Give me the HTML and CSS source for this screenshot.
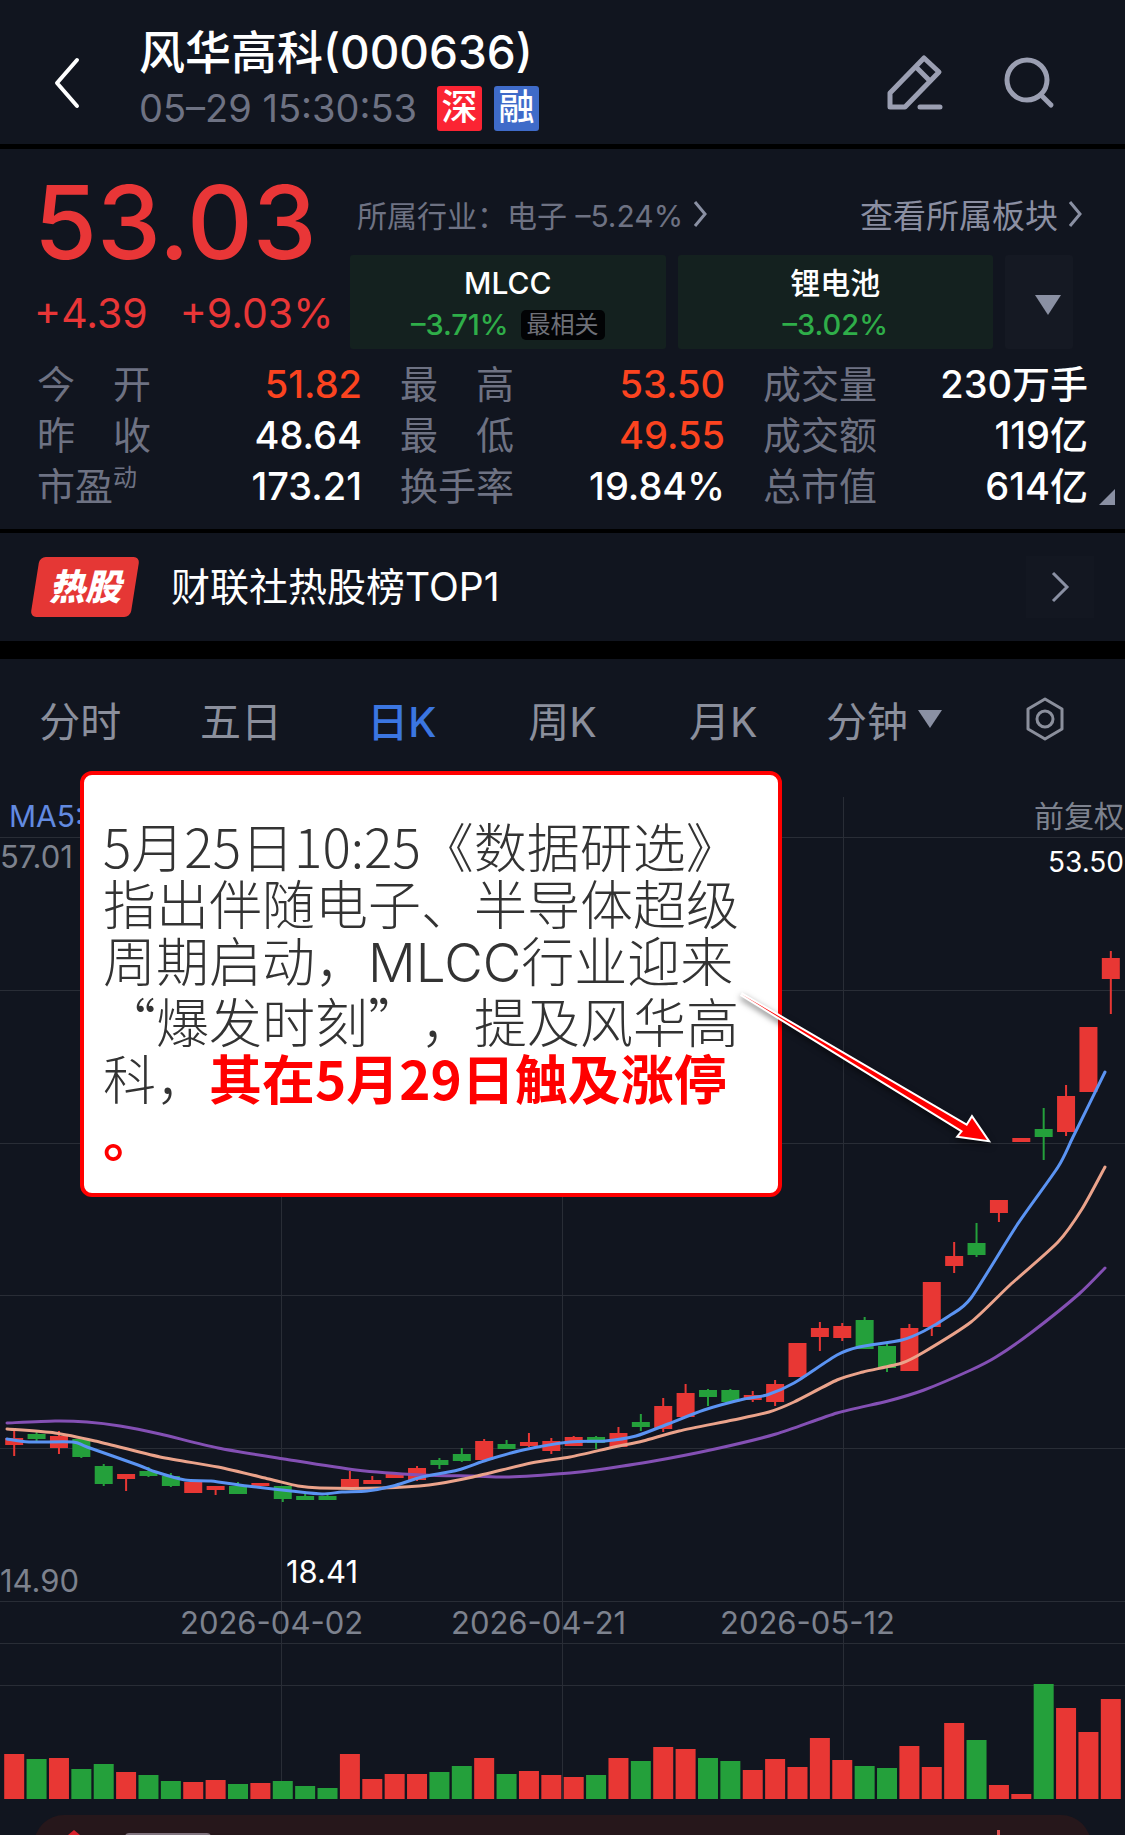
FILE: index.html
```html
<!DOCTYPE html>
<html lang="zh-CN">
<head>
<meta charset="utf-8">
<meta name="viewport" content="width=device-width, initial-scale=1">
<title>风华高科(000636)</title>
<link rel="stylesheet" href="styles.css">
</head>
<body>
<header class="topbar">
  <button class="icon-btn back" aria-label="返回">
    <svg width="28" height="52" viewBox="0 0 28 52"><path d="M24 3 4 26l20 23" fill="none" stroke="#fff" stroke-width="4" stroke-linecap="round" stroke-linejoin="round"/></svg>
  </button>
  <div class="title">
    <h1>风华高科(000636)</h1>
    <div class="meta"><time>05–29 15:30:53</time><span class="badge badge-red">深</span><span class="badge badge-blue">融</span></div>
  </div>
  <button class="icon-btn" aria-label="编辑">
    <svg width="56" height="58" viewBox="0 0 56 58" fill="none" stroke="#9b9fb2" stroke-width="5" stroke-linecap="round" stroke-linejoin="round"><path d="M3 39 37 4 52 18 18 53H3zM29 13 43 27M33 53h20"/></svg>
  </button>
  <button class="icon-btn" aria-label="搜索">
    <svg width="52" height="52" viewBox="0 0 52 52" fill="none" stroke="#9b9fb2" stroke-width="5" stroke-linecap="round"><circle cx="24" cy="23" r="20"/><path d="m38 38 10 10"/></svg>
  </button>
</header>

<section class="quote">
  <div class="quote-top">
    <div class="price-block">
      <div class="price">53.03</div>
      <div class="change"><span>+4.39</span><span>+9.03%</span></div>
    </div>
    <div class="sectors">
      <div class="sector-links">
        <a href="#" class="industry">所属行业：电子 –5.24%<svg class="chev" width="14" height="28" viewBox="0 0 14 28"><path d="m2 2 10 12L2 26"/></svg></a>
        <a href="#" class="more">查看所属板块<svg class="chev" width="14" height="28" viewBox="0 0 14 28"><path d="m2 2 10 12L2 26"/></svg></a>
      </div>
      <div class="concepts">
        <a href="#" class="concept"><span>MLCC</span><span class="down">–3.71% <em>最相关</em></span></a>
        <a href="#" class="concept"><span>锂电池</span><span class="down">–3.02%</span></a>
        <button class="expand" aria-label="展开"><svg width="26" height="20" viewBox="0 0 26 20"><path d="M0 0h26L13 20z" fill="#8a90a3"/></svg></button>
      </div>
    </div>
  </div>
  <dl class="stats">
    <div><dt><i>今</i><i>开</i></dt><dd class="up">51.82</dd></div>
    <div><dt><i>最</i><i>高</i></dt><dd class="up">53.50</dd></div>
    <div><dt>成交量</dt><dd>230万手</dd></div>
    <div><dt><i>昨</i><i>收</i></dt><dd>48.64</dd></div>
    <div><dt><i>最</i><i>低</i></dt><dd class="up">49.55</dd></div>
    <div><dt>成交额</dt><dd>119亿</dd></div>
    <div><dt>市盈<sup>动</sup></dt><dd>173.21</dd></div>
    <div><dt>换手率</dt><dd>19.84%</dd></div>
    <div><dt>总市值</dt><dd>614亿</dd></div>
  </dl>
  <svg class="corner" width="16" height="16" viewBox="0 0 16 16"><path d="M16 0v16H0z" fill="#8a90a3"/></svg>
</section>

<a href="#" class="hot">
  <span class="hot-badge">热股</span>
  <span class="hot-text">财联社热股榜TOP1</span>
  <span class="hot-go"><svg width="20" height="32" viewBox="0 0 20 32"><path d="m3 2 14 14L3 30" fill="none" stroke="#8a90a3" stroke-width="3"/></svg></span>
</a>

<nav class="tabs">
  <button>分时</button>
  <button>五日</button>
  <button class="active">日K</button>
  <button>周K</button>
  <button>月K</button>
  <button>分钟<svg width="24" height="18" viewBox="0 0 24 18"><path d="M0 0h24L12 18z" fill="#8a90a3"/></svg></button>
  <button aria-label="设置"><svg width="40" height="44" viewBox="0 0 40 44" fill="none" stroke="#8b8f9c" stroke-width="3" stroke-linejoin="round"><path d="M20 2 37 12v20L20 42 3 32V12z"/><circle cx="20" cy="22" r="8"/></svg></button>
</nav>

<main class="chart">
  <svg class="plot" viewBox="0 771 1125 1044" role="img" aria-label="日K线图">
    <path class="grid" d="M0 837.5H1125M0 990.5H1125M0 1143.5H1125M0 1295.5H1125M0 1448.5H1125M0 1601.5H1125M0 1643.5H1125M0 1685.5H1125M281.5 797V1799M562.5 797V1799M843.5 797V1799"/>
    <g id="candles"></g>
    <g id="averages"></g>
    <g id="volumes"></g>
    <g class="labels">
      <text x="9" y="827" class="ma">MA5:</text>
      <text x="0" y="868">57.01</text>
      <text x="1124" y="827" class="adjust" text-anchor="end">前复权</text>
      <text x="1124" y="872" class="lit high" text-anchor="end">53.50</text>
      <text x="0" y="1592">14.90</text>
      <text x="286" y="1583" class="lit">18.41</text>
      <text x="180" y="1634">2026-04-02</text>
      <text x="451" y="1634">2026-04-21</text>
      <text x="720" y="1634">2026-05-12</text>
    </g>
  </svg>
  <aside class="note">
    <p>5月25日10:25《数据研选》<br>指出伴随电子、半导体超级<br>周期启动，<span class="latin">MLCC</span>行业迎来<br>“爆发时刻”，提及风华高<br>科，<b>其在5月29日触及涨停<br>。</b></p>
  </aside>
  <svg class="arrow" viewBox="0 771 1125 1044" aria-hidden="true"><path d="M741 994 967 1126 972 1118 987 1140 959 1136 963 1131Z"/></svg>
</main>

<footer class="banner">
  <div class="banner-card">
    <svg class="spark" width="12" height="5" viewBox="0 0 12 5"><path d="M0 5 6 0l6 5z" fill="#d8222c"/></svg>
    <span class="banner-line"></span>
    <span class="banner-tick"></span>
  </div>
</footer>
<script src="chart.js"></script>
</body>
</html>
```
FILE: styles.css
```css
* { box-sizing: border-box; }
body {
  margin: 0;
  background: #11151f;
  color: #fff;
  font-family: Inter, "Noto Sans CJK SC", sans-serif;
}
button {
  margin: 0;
  padding: 0;
  border: 0;
  background: none;
  color: inherit;
  font: inherit;
}
a { color: inherit; text-decoration: none; }
svg { display: block; flex: none; }

.topbar {
  display: flex;
  align-items: center;
  height: 149px;
  padding: 22px 70px 0 53px;
  border-bottom: 5px solid #000;
}
.back { margin: 0 58px 0 0; }
.title { flex: 1; margin-bottom: 8px; }
.icon-btn + .icon-btn { margin-left: 60px; }
.title h1 {
  margin: 0;
  font-size: 46px;
  line-height: 58px;
  font-weight: 500;
}
.meta {
  display: flex;
  align-items: center;
  height: 54px;
  color: #6e7283;
  font-size: 38px;
}
.badge {
  width: 45px;
  height: 45px;
  margin-left: 12px;
  border-radius: 3px;
  color: #fff;
  font-size: 36px;
  line-height: 43px;
  text-align: center;
  font-weight: 500;
}
.meta time + .badge { margin-left: 20px; }
.badge-red { background: #fb2433; }
.badge-blue { background: #3f6bc9; }

.quote {
  position: relative;
  padding: 29px 37px 17px;
  border-bottom: 4px solid #000;
}
.quote-top { display: grid; grid-template-columns: 313px 1fr; }
.price-block { margin-left: -3px; }
.price {
  color: #e93637;
  font-size: 102px;
  line-height: 88px;
  font-weight: 500;
}
.change {
  display: flex;
  gap: 32px;
  margin-top: 22px;
  color: #e93637;
  font-size: 41px;
  line-height: 50px;
  white-space: nowrap;
}
.sector-links {
  display: flex;
  justify-content: space-between;
  align-items: center;
  height: 77px;
  padding: 0 6px 5px 7px;
}
.sector-links a { display: flex; align-items: center; white-space: nowrap; gap: 10px; }
.chev { fill: none; stroke: #8a90a3; stroke-width: 3; }
.industry { color: #6e7283; font-size: 30px; }
.more { color: #8b8fa2; font-size: 33px; }
.concepts {
  display: grid;
  grid-template-columns: 1fr 1fr 68px;
  gap: 12px;
  height: 94px;
  padding-right: 15px;
}
.concept {
  display: flex;
  flex-direction: column;
  align-items: center;
  background: #14211f;
  border-radius: 3px;
  padding-top: 7px;
  font-size: 30px;
  line-height: 42px;
  font-weight: 500;
}
.down { display: flex; align-items: center; gap: 12px; color: #2fae49; font-size: 29px; }
.down em {
  padding: 0 6px;
  border-radius: 5px;
  background: #020305;
  color: #6e7078;
  font-size: 24px;
  line-height: 30px;
  font-style: normal;
  font-weight: 400;
}
.expand { display: grid; place-items: center; padding: 6px 0 0 18px; background: #151923; border-radius: 3px; }

.stats {
  display: grid;
  grid-template-columns: repeat(3, 1fr);
  column-gap: 38px;
  margin: 10px 0 0;
  font-size: 38px;
  line-height: 51px;
}
.stats div { display: flex; justify-content: space-between; white-space: nowrap; }
.stats dt { display: flex; justify-content: space-between; width: 114px; color: #6e7283; }
.stats dt:has(sup) { justify-content: flex-start; }
.stats i { font-style: normal; }
.stats sup { font-size: 24px; line-height: 34px; vertical-align: top; }
.stats dd { margin: 0; font-weight: 500; }
.stats .up { color: #fb431f; }
.corner { position: absolute; right: 10px; bottom: 24px; }

.hot {
  display: flex;
  align-items: center;
  height: 126px;
  padding: 0 31px 0 35px;
  border-bottom: 18px solid #000;
}
.hot-badge {
  position: relative;
  z-index: 0;
  width: 100px;
  font-size: 36px;
  line-height: 60px;
  font-weight: 900;
  font-style: italic;
  text-align: center;
}
.hot-badge::before {
  content: "";
  position: absolute;
  z-index: -1;
  inset: 0;
  background: #e53735;
  border-radius: 6px;
  transform: skewX(-9deg);
}
.hot-text { flex: 1; margin-left: 36px; font-size: 39px; line-height: 60px; }
.hot-go { display: grid; place-items: center; width: 68px; height: 62px; background: #131721; }

.tabs {
  display: grid;
  grid-template-columns: repeat(7, 1fr);
  height: 112px;
  color: #8b8f9c;
  font-size: 41px;
}
.tabs button { display: flex; align-items: center; justify-content: center; gap: 10px; padding-top: 8px; }
.tabs .active { color: #3b76e1; font-weight: 500; }

.chart { position: relative; }
.plot { width: 100%; height: auto; }
.grid { fill: none; stroke: #292d36; stroke-width: 1; }
.rise { fill: #e83734; }
.fall { fill: #24a03b; }
.line { fill: none; stroke-width: 3; stroke-linecap: round; stroke-linejoin: round; }
.ma5 { stroke: #5b94f3; }
.ma10 { stroke: #eba38b; }
.ma20 { stroke: #8450b4; }
.labels { fill: #7d828e; font-size: 31px; }
.labels .ma { fill: #628ae0; font-size: 30px; }
.labels .adjust { font-size: 30px; }
.labels .lit { fill: #fff; }
.labels .high { font-size: 28px; }
.note {
  position: absolute;
  top: 0;
  left: 80px;
  width: 702px;
  padding: 42px 19px 30px;
  background: #fff;
  border: 4px solid #f00;
  border-radius: 12px;
  color: #333;
  font-family: "Noto Sans CJK SC", sans-serif;
  font-size: 53px;
  line-height: 57px;
  font-weight: 300;
  text-spacing-trim: space-all;
}
.note p { margin: 0; white-space: nowrap; }
.note .latin { font-family: Inter, sans-serif; }
.note b { color: #f00; font-weight: 700; }
.arrow {
  position: absolute;
  inset: 0;
  width: 100%;
  fill: #f00;
  stroke: #fff;
  stroke-width: 4;
  paint-order: stroke;
  filter: drop-shadow(0 3px 3px #0008);
}

.banner { height: 20px; padding: 0 34px; overflow: hidden; }
.banner-card {
  display: flex;
  align-items: flex-start;
  height: 60px;
  padding: 15px 57px 0 34px;
  border-radius: 30px;
  background: #26171b;
}
.banner-line { width: 86px; height: 12px; margin: 3px auto 0 45px; border-radius: 4px; background: #80747f; }
.banner-tick { width: 3px; height: 12px; margin-right: 34px; background: #e05050; }
```
FILE: chart.js
```js
// Each row: direction, body top, body bottom, high, low, volume height.
const rows = [
  ["r",1438,1445,1431,1456,45],["g",1434,1439,1430,1443,40],["r",1436,1448,1431,1454,41],["g",1439,1457,1437,1458,30],
  ["g",1466,1484,1464,1486,35],["r",1474,1479,1474,1491,27],["g",1471,1476,1467,1477,24],["g",1476,1486,1473,1487,18],
  ["r",1482,1493,1482,1493,17],["r",1486,1490,1486,1495,19],["g",1486,1494,1482,1494,15],["r",1483,1486,1483,1486,16],
  ["g",1486,1499,1486,1502,18],["g",1496,1500,1494,1500,13],["g",1496,1500,1495,1500,11],["r",1479,1488,1471,1488,45],
  ["r",1480,1484,1476,1484,20],["r",1473,1478,1472,1478,25],["r",1468,1480,1466,1481,25],["g",1460,1465,1458,1469,27],
  ["g",1454,1461,1448,1462,33],["r",1441,1460,1439,1460,41],["g",1444,1449,1440,1449,25],["r",1442,1446,1433,1447,28],
  ["r",1441,1451,1438,1454,24],["r",1437,1446,1436,1446,22],["g",1437,1443,1436,1449,24],["r",1433,1447,1427,1447,41],
  ["g",1422,1427,1414,1431,38],["r",1406,1429,1398,1432,52],["r",1393,1417,1384,1417,50],["g",1390,1397,1389,1406,41],
  ["g",1390,1402,1389,1402,38],["r",1395,1400,1391,1402,29],["r",1384,1402,1380,1406,40],["r",1343,1377,1343,1377,32],
  ["r",1328,1337,1322,1351,61],["r",1326,1338,1323,1341,39],["g",1320,1349,1317,1349,33],["g",1346,1368,1344,1372,31],
  ["r",1328,1371,1324,1371,53],["r",1282,1327,1282,1336,32],["r",1256,1266,1242,1273,76],["g",1243,1255,1223,1257,59],
  ["r",1200,1213,1200,1222,14],["r",1138,1142,1138,1142,5],["g",1129,1137,1108,1160,115],["r",1096,1132,1085,1136,91],
  ["r",1027,1092,1027,1092,67],["r",958,979,951,1014,100]
];

// Moving averages as x, y pairs.
const averages = {
  ma20: [7,1423,55,1421,87,1422,120,1426,160,1434,218,1448,284,1459,356,1470,422,1475,473,1476,509,1477,570,1473,596,1470,654,1461,715,1449,776,1434,837,1413,888,1401,924,1390,971,1370,996,1357,1032,1332,1079,1294,1105,1268],
  ma10: [7,1429,55,1433,95,1441,160,1457,218,1467,269,1479,298,1486,320,1488,382,1488,429,1485,473,1477,531,1463,570,1457,614,1447,643,1441,679,1431,733,1420,769,1412,794,1402,837,1380,863,1372,902,1363,924,1352,971,1322,1010,1285,1058,1242,1082,1209,1105,1167],
  ma5: [7,1439,29,1442,73,1442,87,1447,138,1465,156,1472,185,1480,211,1481,247,1486,291,1491,322,1494,342,1492,367,1491,393,1486,422,1477,458,1470,487,1460,523,1450,570,1442,605,1441,636,1436,668,1424,704,1410,744,1399,767,1395,794,1383,837,1355,859,1347,902,1340,924,1331,949,1316,971,1298,1017,1225,1058,1167,1073,1137,1105,1072]
};

const STEP = 22.38;
const FIRST = 14.2;
const BASE = 1799;

function shape(parent, tag, attrs) {
  const el = document.createElementNS("http://www.w3.org/2000/svg", tag);
  for (const key in attrs) el.setAttribute(key, attrs[key]);
  document.getElementById(parent).append(el);
}

// Smooth curve through the points (Catmull-Rom turned into cubic segments).
function curve(v) {
  const p = [];
  for (let i = 0; i < v.length; i += 2) p.push([v[i], v[i + 1]]);
  let d = "M" + p[0];
  for (let i = 0; i < p.length - 1; i++) {
    const a = p[i - 1] || p[i], b = p[i], c = p[i + 1], e = p[i + 2] || c;
    d += `C${b[0] + (c[0] - a[0]) / 8} ${b[1] + (c[1] - a[1]) / 8} ${c[0] - (e[0] - b[0]) / 8} ${c[1] - (e[1] - b[1]) / 8} ${c}`;
  }
  return d;
}

rows.forEach(([dir, top, bottom, high, low, volume], i) => {
  const x = FIRST + i * STEP;
  const cls = dir === "r" ? "rise" : "fall";
  shape("candles", "rect", { class: cls, x: x - 1, y: high, width: 2, height: low - high });
  shape("candles", "rect", { class: cls, x: x - 9, y: top, width: 18, height: bottom - top });
  shape("volumes", "rect", { class: cls, x: x - 10, y: BASE - volume, width: 20, height: volume });
});

for (const name in averages) {
  shape("averages", "path", { class: "line " + name, d: curve(averages[name]) });
}
```
